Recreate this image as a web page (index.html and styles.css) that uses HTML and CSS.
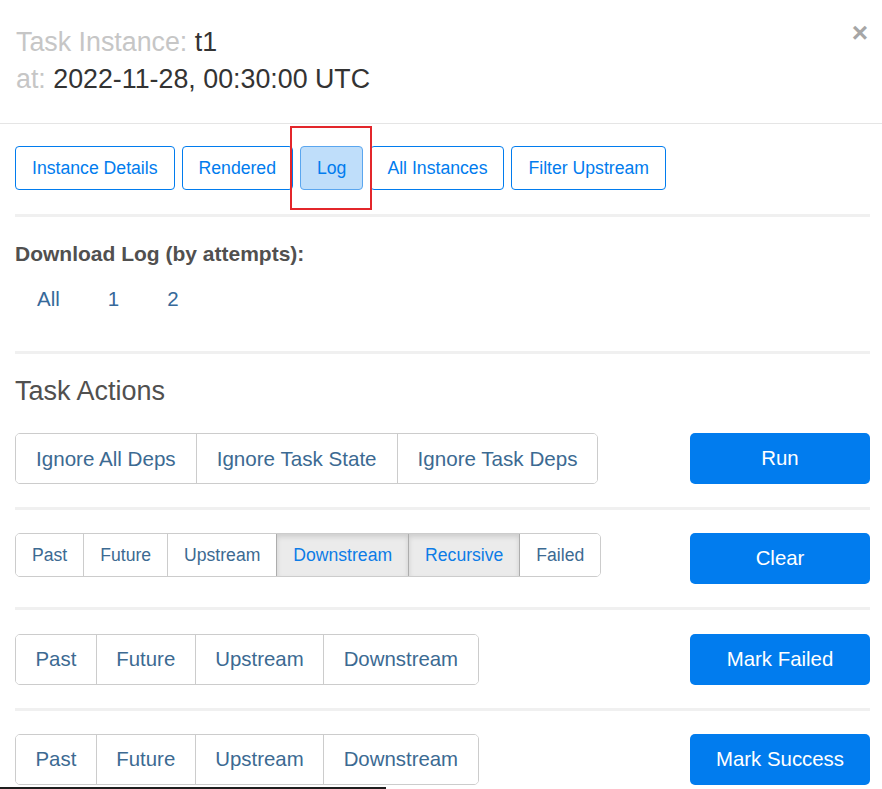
FILE: index.html
```html
<!DOCTYPE html>
<html>
<head>
<meta charset="utf-8">
<link rel="stylesheet" href="styles.css">
</head>
<body>
<div class="modal">
  <div class="modal-header">
    <div class="title-line"><span class="label">Task Instance:</span> <span class="value">t1</span></div>
    <div class="title-line"><span class="label">at:</span> <span class="value">2022-11-28, 00:30:00 UTC</span></div>
    <span class="close">&times;</span>
  </div>
  <div class="modal-body">
    <div class="tabs">
      <a class="tab">Instance Details</a>
      <a class="tab">Rendered</a>
      <a class="tab active">Log</a>
      <a class="tab">All Instances</a>
      <a class="tab">Filter Upstream</a>
    </div>
    <div class="rule first"></div>
    <div class="dl-title">Download Log (by attempts):</div>
    <div class="dl-links">
      <a class="dl-link">All</a>
      <a class="dl-link">1</a>
      <a class="dl-link">2</a>
    </div>
    <div class="rule second"></div>
    <div class="ta-title">Task Actions</div>

    <div class="action-row row-first">
      <div class="group lg wide">
        <span class="g-btn">Ignore All Deps</span>
        <span class="g-btn">Ignore Task State</span>
        <span class="g-btn">Ignore Task Deps</span>
      </div>
      <button class="primary">Run</button>
    </div>
    <div class="rule action"></div>
    <div class="action-row">
      <div class="group sm">
        <span class="g-btn">Past</span>
        <span class="g-btn">Future</span>
        <span class="g-btn">Upstream</span>
        <span class="g-btn on">Downstream</span>
        <span class="g-btn on">Recursive</span>
        <span class="g-btn">Failed</span>
      </div>
      <button class="primary">Clear</button>
    </div>
    <div class="rule action"></div>
    <div class="action-row lower">
      <div class="group lg">
        <span class="g-btn">Past</span>
        <span class="g-btn">Future</span>
        <span class="g-btn">Upstream</span>
        <span class="g-btn">Downstream</span>
      </div>
      <button class="primary">Mark Failed</button>
    </div>
    <div class="rule action"></div>
    <div class="action-row">
      <div class="group lg">
        <span class="g-btn">Past</span>
        <span class="g-btn">Future</span>
        <span class="g-btn">Upstream</span>
        <span class="g-btn">Downstream</span>
      </div>
      <button class="primary">Mark Success</button>
    </div>
  </div>
  <div class="highlight"></div>
  <div class="scrollbar"></div>
</div>
</body>
</html>
```

FILE: styles.css
```css
html, body {
  margin: 0;
  padding: 0;
  background: #fff;
}
body {
  font-family: "Liberation Sans", Arial, sans-serif;
  color: #51504f;
  width: 882px;
  height: 789px;
  overflow: hidden;
}
.modal {
  position: relative;
  width: 882px;
  height: 789px;
}
.modal-header {
  position: relative;
  height: 124px;
  border-bottom: 1px solid #e5e5e5;
  padding: 24px 15px 0 16px;
  box-sizing: border-box;
}
.title-line {
  font-size: 26.8px;
  line-height: 37px;
  white-space: nowrap;
}
.title-line .label {
  color: #c6c6c6;
}
.title-line .value {
  color: #333;
}
.close {
  position: absolute;
  right: 14px;
  top: 16px;
  font-size: 28px;
  line-height: 34px;
  font-weight: bold;
  color: #a6a6a6;
}
.modal-body {
  padding: 0 12px 0 15px;
}
.tabs {
  display: flex;
  gap: 7px;
  margin-top: 22px;
}
.tab {
  display: block;
  height: 44px;
  line-height: 42px;
  box-sizing: border-box;
  padding: 0 16px;
  border: 1px solid #017cee;
  border-radius: 4px;
  font-size: 17.65px;
  color: #017cee;
  white-space: nowrap;
}
.tab.active {
  background: #bfdefa;
  border-color: #5aa6ef;
}
.rule {
  height: 3px;
  background: #f0f0f0;
}
.rule.first {
  margin-top: 24px;
}
.dl-title {
  margin-top: 26px;
  font-size: 21px;
  font-weight: bold;
  line-height: 22px;
  color: #51504f;
}
.dl-links {
  display: flex;
  gap: 48px;
  margin-top: 23px;
  padding-left: 22px;
}
.dl-link {
  font-size: 20.5px;
  line-height: 22px;
  color: #36699a;
}
.rule.second {
  margin-top: 41px;
}
.ta-title {
  margin-top: 22px;
  font-size: 27px;
  line-height: 30px;
  color: #51504f;
}
.action-row {
  display: flex;
  justify-content: space-between;
  align-items: flex-start;
  margin-top: 23px;
}
.action-row.row-first {
  margin-top: 27px;
}
.action-row.lower {
  margin-top: 24px;
}
.rule.action {
  margin-top: 23px;
}
.group {
  display: flex;
  border: 1px solid #cccccc;
  border-radius: 5px;
  overflow: hidden;
}
.g-btn {
  display: block;
  color: #3c6a92;
  white-space: nowrap;
  border-left: 1px solid #cccccc;
  background: #fff;
}
.g-btn:first-child {
  border-left: none;
}
.group.lg .g-btn {
  height: 49px;
  line-height: 49px;
  font-size: 20.4px;
  padding: 0 19.5px;
}
.group.lg.wide .g-btn {
  font-size: 20.6px;
  padding: 0 20px;
}
.group.sm .g-btn {
  height: 42px;
  line-height: 42px;
  font-size: 17.6px;
  padding: 0 16px;
}
.g-btn.on {
  background: #ebebeb;
  color: #0d7ce6;
  border-left-color: #adadad;
  box-shadow: inset 0 3px 5px rgba(0, 0, 0, 0.125);
}
.g-btn.on + .g-btn {
  border-left-color: #adadad;
}
.primary {
  width: 180px;
  height: 51px;
  border: none;
  border-radius: 5px;
  background: #017cee;
  color: #fff;
  font-family: "Liberation Sans", Arial, sans-serif;
  font-size: 20.4px;
  padding: 0;
  flex-shrink: 0;
}
.highlight {
  position: absolute;
  left: 290px;
  top: 126px;
  width: 82px;
  height: 84px;
  box-sizing: border-box;
  border: 2.5px solid #e3262b;
}
.scrollbar {
  position: absolute;
  left: 0;
  bottom: 0;
  width: 386px;
  height: 2px;
  background: #1e1e1e;
}
```
